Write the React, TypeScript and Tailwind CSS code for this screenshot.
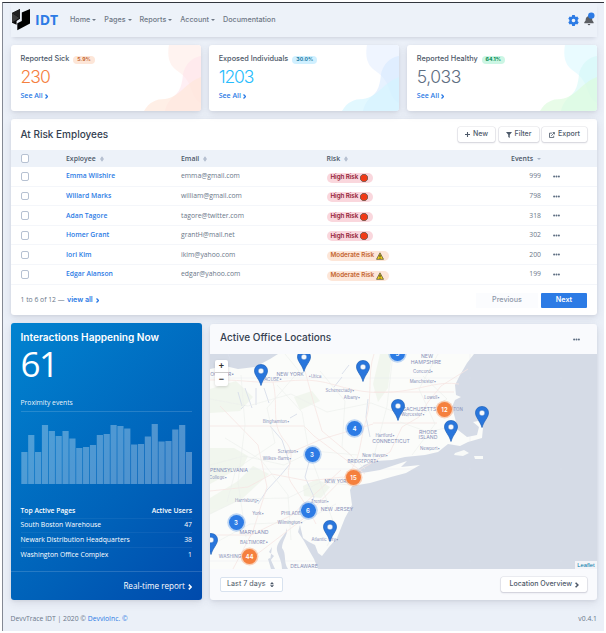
import React from "react";

const heading = "font-['Inter',sans-serif]";
const lift = "shadow-[0_3px_8px_rgba(65,69,88,0.12),0_1px_3px_rgba(65,69,88,0.08)]";

function Caret() {
  return <span className="ml-[2px] inline-block h-0 w-0 border-x-[2.500px] border-t-[2.500px] border-x-transparent border-t-[#6f7886]" />;
}

function Chevron({ className = "" }: { className?: string }) {
  return (
    <svg viewBox="0 0 6 10" className={className} fill="none" stroke="currentColor" strokeWidth="2.600">
      <path d="M1 1l4 4-4 4" />
    </svg>
  );
}

function Dots() {
  return (
    <svg viewBox="0 0 7 3" className="h-[3px] w-[7px]" fill="#5e6e82">
      <circle cx="1.100" cy="1.500" r="1" />
      <circle cx="3.500" cy="1.500" r="1" />
      <circle cx="5.900" cy="1.500" r="1" />
    </svg>
  );
}

function Logo() {
  return (
    <svg viewBox="0 0 18 22" className="h-[22px] w-[18px]">
      <path d="M0 4L8 0v9.800L4.600 12v3.800L0 13.800z" fill="#0a0a0a" />
      <path d="M0 4l7.500 5L0 13.500z" fill="#3c3c3c" />
      <path d="M0 4L8 0v9z" fill="#222" />
      <path d="M9.800 3.500L18 0v14.500L5.300 21.300v-7L9.800 12z" fill="#000" />
    </svg>
  );
}

const stats = [
  { title: "Reported Sick", pct: "5.9%", value: "230", color: "text-[#f5803e]", badge: "bg-[#fde6d8] text-[#c46632]", a: "#fff2ef", b: "#ffe2eb", c: "#ffe6d8", vt: "tracking-[-0.9px]" },
  { title: "Exposed Individuals", pct: "30.0%", value: "1203", color: "text-[#27bcfd]", badge: "bg-[#d0f0ff] text-[#1978a2]", a: "#eef4ff", b: "#d3e7ff", c: "#d2f5ff", vt: "tracking-[-1.100px]" },
  { title: "Reported Healthy", pct: "64.1%", value: "5,033", color: "text-[#5e6e82]", badge: "bg-[#ccf6e4] text-[#00864e]", a: "#e8fbff", b: "#d2f8f6", c: "#dcfadb", vt: "tracking-[-0.500px]" },
];

function StatCard({ s }: { s: (typeof stats)[number] }) {
  return (
    <div className={`relative h-[66px] rounded-[3px] bg-white pl-[10px] ${lift}`}>
      <svg viewBox="0 0 57 66" className="absolute right-0 top-0 h-[66px] w-[57px] rounded-r-[3px]">
        <path d="M25 0C23 11 25 19 31 24C36 28 42 31 46 41C49 49 51 55 57 58V0z" fill={s.a} opacity=".95" />
        <path d="M57 11C48 12 41 20 39 29C38 40 36 47 29 52C24 57 22 61 21 66H57z" fill={s.b} opacity=".55" />
        <path d="M0 66C5 57 12 54 21 54C36 52 41 38 57 32V66z" fill={s.c} opacity=".65" />
      </svg>
      <div className="relative">
        <div className="flex h-[28px] items-center pt-[1px]">
          <span className={`${heading} text-[7.300px] font-medium text-[#4d5969]`}>{s.title}</span>
          <span className={`${heading} ${s.badge} ml-[4px] flex h-[8px] items-center rounded-full px-[4px] text-[5.200px] font-bold`}>{s.pct}</span>
        </div>
        <div className={`${heading} ${s.color} ${s.vt} mt-[-6px] h-[20px] text-[17.500px] font-light leading-[20px]`}>{s.value}</div>
        <div className="mt-[4px] flex items-center gap-[2px] text-[7px] font-semibold leading-[10px] text-[#2c7be5]">
          See All <Chevron className="mt-[1px] h-[5px] w-[3px]" />
        </div>
      </div>
    </div>
  );
}

const rows = [
  ["Emma Wilshire", "emma@gmail.com", "high", "999"],
  ["Willard Marks", "william@gmail.com", "high", "798"],
  ["Adan Tagore", "tagore@twitter.com", "high", "318"],
  ["Homer Grant", "grantH@mail.net", "high", "302"],
  ["Iori Kim", "ikim@yahoo.com", "mod", "200"],
  ["Edgar Alanson", "edgar@yahoo.com", "mod", "199"],
];

function Sort() {
  return (
    <svg viewBox="0 0 4 6" className="ml-[4px] h-[6px] w-[4px]" fill="none" stroke="#a9b5c8" strokeWidth=".8">
      <path d="M.7 2.500L2 .8l1.300 1.700zM.7 3.500L2 5.200l1.300-1.700z" />
    </svg>
  );
}

function Check() {
  return <span className="h-[8.500px] w-[8.500px] rounded-[2px] border border-[#b6c1d2] bg-white" />;
}

function Risk({ kind }: { kind: string }) {
  return kind === "high" ? (
    <span className={`${heading} flex h-[10px] w-[46px] items-center gap-[1.500px] rounded-full bg-[#fad7dd] pl-[4px] text-[6.300px] font-semibold tracking-[-0.100px] text-[#932338]`}>
      High Risk
      <svg viewBox="0 0 8 8" className="h-[8px] w-[8px]">
        <path d="M2.500.4h3l2.100 2.100v3L5.500 7.600h-3L.4 5.500v-3z" fill="#f03a17" stroke="#6d5148" strokeWidth=".9" />
      </svg>
    </span>
  ) : (
    <span className={`${heading} flex h-[10px] w-[62px] items-center gap-[1.500px] rounded-full bg-[#fde6d8] pl-[4px] text-[6.300px] font-semibold text-[#c46632]`}>
      Moderate Risk
      <svg viewBox="0 0 8 8" className="h-[8px] w-[8px]">
        <path d="M4 .8L7.500 7.300h-7z" fill="#f2d21b" stroke="#5f5a3c" strokeWidth=".8" />
        <path d="M4 2.800v2.300M4 5.700v.9" stroke="#222" strokeWidth=".9" />
      </svg>
    </span>
  );
}

const cols = "grid grid-cols-[45.500px_115px_145.500px_auto_56px] items-center pl-[10px]";

function Button({ children, className = "" }: { children: React.ReactNode; className?: string }) {
  return (
    <span className={`${heading} ${className} flex h-[15px] items-center justify-center gap-[3px] rounded-[2px] bg-white text-[7px] font-medium text-[#4d5969] shadow-[0_0_0_0.600px_rgba(43,45,80,0.13),0_1px_2px_rgba(43,45,80,0.16)]`}>
      {children}
    </span>
  );
}

function Employees() {
  return (
    <section className={`mt-[8px] h-[196px] rounded-[3px] bg-white ${lift}`}>
      <div className="flex h-[31px] items-center justify-between pl-[10px] pr-[10px]">
        <h2 className={`${heading} text-[10px] font-medium text-[#344050]`}>At Risk Employees</h2>
        <div className="flex gap-[3.500px]">
          <Button className="w-[37px]">
            <svg viewBox="0 0 6 6" className="h-[5px] w-[5px]" stroke="#4d5969" strokeWidth="1.300"><path d="M3 0v6M0 3h6" /></svg>New
          </Button>
          <Button className="w-[40px]">
            <svg viewBox="0 0 8 8" className="h-[6px] w-[6px]" fill="#4d5969"><path d="M0 0h8L5 3.800V8L3 6.500V3.800z" /></svg>Filter
          </Button>
          <Button className="w-[45px]">
            <svg viewBox="0 0 8 8" className="h-[6px] w-[6px]" fill="none" stroke="#4d5969" strokeWidth="1.100"><path d="M4 1.500H.7v5.800h5.600V5M3 5.200L7 1M4.800.700h2.500v2.500" /></svg>Export
          </Button>
        </div>
      </div>
      <div className={`${cols} h-[17px] bg-[#edf2f9] text-[6.900px] font-semibold text-[#4d5969]`}>
        <Check />
        <span className="flex items-center pt-[2px]">Exployee<Sort /></span>
        <span className="flex items-center pt-[2px]">Email<Sort /></span>
        <span className="flex items-center justify-between pt-[2px]">
          <span className="flex items-center">Risk<Sort /></span>
          <span className="flex items-center">Events<i className="ml-[4px] h-0 w-0 border-x-[2px] border-t-[2px] border-x-transparent border-t-[#a9b5c8]" /></span>
        </span>
      </div>
      {rows.map(([name, email, risk, n]) => (
        <div key={name} className={`${cols} h-[19.600px] border-b border-[#f4f6fa] pt-[0.500px] text-[6.800px] text-[#6a7789]`}>
          <Check />
          <span className="font-semibold text-[#2c7be5]">{name}</span>
          <span>{email}</span>
          <span className="flex items-center justify-between"><span className="pt-[2px]"><Risk kind={risk} /></span><span>{n}</span></span>
          <span className="pl-[11.500px]"><Dots /></span>
        </div>
      ))}
      <div className="flex h-[30px] items-center justify-between pl-[10px] pr-[10px] pt-[2px] text-[6.800px] text-[#6a7789]">
        <span className="flex items-center">1 to 6 of 12 —<b className={`${heading} ml-[2.500px] text-[7.100px] font-semibold text-[#2c7be5]`}>view all</b><Chevron className="ml-[3px] h-[5px] w-[3px] text-[#2c7be5]" /></span>
        <span className={`${heading} flex text-[7.200px] font-medium`}>
          <span className="flex h-[15px] w-[62px] items-center justify-center bg-[#fbfcfe] text-[#8d97a8]">Previous</span>
          <span className="ml-[3px] flex h-[15px] w-[46px] items-center justify-center rounded-[1px] bg-[#2c7be5] font-semibold text-white">Next</span>
        </span>
      </div>
    </section>
  );
}

const bars = [32, 49, 32, 59, 53, 48, 53, 45.5, 36, 37, 39, 49, 50, 59, 58, 55.5, 39.500, 40, 47.500, 60, 42.500, 43, 54.500, 59, 32];

function Interactions() {
  return (
    <section className={`flex h-[277px] w-[191.500px] flex-col rounded-[3px] bg-[linear-gradient(-45deg,#004aac_0%,#0060b8_35%,#0183d0_100%)] text-white ${lift}`}>
      <div className="h-[238px] px-[10px] pt-[6px]">
        <h2 className={`${heading} h-[17px] whitespace-nowrap text-[10.100px] font-semibold leading-[17px]`}>Interactions Happening Now</h2>
        <div className="h-[36px] text-[35px] leading-[35px] tracking-[-1.500px]">61</div>
        <div className="mt-[15px] h-[15px] border-b border-white/15 text-[6.750px] leading-[12px] text-white/95">Proximity events</div>
        <svg viewBox="0 0 171.500 60" className="mt-[12px] block h-[60px] w-[171.500px]" fill="#fff" fillOpacity=".31">
          {bars.map((h, i) => (
            <rect key={i} x={i * 6.860 + 0.300} y={60 - h} width={6.200} height={h} />
          ))}
        </svg>
        <div className="mt-[20px] text-[6.800px]">
          <div className="flex h-[14.500px] items-center justify-between border-b border-white/5 font-semibold"><span>Top Active Pages</span><span>Active Users</span></div>
          <div className="flex h-[14.500px] items-center justify-between border-b border-white/5"><span>South Boston Warehouse</span><span>47</span></div>
          <div className="flex h-[14.500px] items-center justify-between border-b border-white/5"><span>Newark Distribution Headquarters</span><span>38</span></div>
          <div className="flex h-[14.500px] items-center justify-between"><span>Washington Office Complex</span><span>1</span></div>
        </div>
      </div>
      <div className="mt-[10px] flex flex-1 items-center justify-end gap-[3px] border-t border-white/15 pr-[10px] pt-[1px] text-[8.100px] font-medium">Real-time report <Chevron className="mt-[1px] h-[6px] w-[4px]" /></div>
    </section>
  );
}

const places: [string, number, number, number][] = [
  ["NEW YORK", 80, 22, 5.100], ["OC", 4, 22, 5], ["R•", 21, 22, 5], ["ACUSE•", 63, 27, 4.500], ["•Utica", 105, 24, 4.300], ["Schenectady•", 130, 37.500, 4.300], ["Albany•", 142, 44.500, 4.300],
  ["Binghamton•", 66, 69, 4.300], ["Scranton•", 78, 99, 4.300], ["Wilkes-Barre•", 67, 106, 4.300], ["Hartford•", 175, 83, 4.300], ["CONNECTICUT", 181, 88.500, 5.100], ["New Haven•", 165, 103, 4.300],
  ["NEW", 217, 4, 5.200], ["HAMPSHIRE", 216, 10, 5.200], ["Concord•", 213, 19, 4.300], ["Manchester•", 213, 28.500, 4.300], ["Lowell•", 222, 44.500, 4.300], ["MASSACHUSETTS", 204, 57, 5], ["Worcester•", 203, 61.500, 4.300], ["TON", 248, 57, 4.500],
  ["RHODE", 218, 79.500, 5.200], ["ISLAND", 218, 85, 5.200], ["Newport•", 220, 95.500, 4.300], ["BRIDGEPORT•", 153, 109, 4.500], ["PENNSYLVANIA", 19, 118, 5], ["College•", 8, 125, 4.300], ["NEW YORK", 127, 129, 4.700],
  ["Harrisburg•", 37, 148, 4.300], ["York•", 48, 161, 4.300], ["PHILADE", 81, 161, 4.700], ["Trenton•", 110, 149, 4.300], ["NEW JERSEY", 127, 156.500, 5.100], ["Wilmington•", 80, 170, 4.300], ["MARYLAND", 44, 180, 5.200],
  ["BALTIMORE•", 44, 189.500, 4.500], ["WASHING", 20, 204, 4.700], ["Atlantic City•", 115, 186.500, 4.300], ["DELAWARE", 94, 214, 5.100],
];

function MapArt() {
  return (
    <svg viewBox="0 0 387 215" className="block h-[215px] w-[387px]">
      <rect width="387" height="215" fill="#d5dbe6" />
      <path fill="#fbfcfa" d="M0 15L15 12L28 15L45 13L60 5L68 0H264L257 9L250 21L245 31L246 41L251 43L245 46L242 53L245 64L248 76L257 83L267 81L269 73L263 68L268 67L273 74L272 84L258 88L250 92L238 90L228 98L215 101L195 103L182 106L165 107L154 111L144 118L140 123L152 119L170 116L197 107L191 113L210 111L196 119L181 123L160 129L142 132L140 136L142 151L135 164L127 184L119 193L112 202L108 199L105 191L99 188L93 184L90 171L88 178L94 187L100 198L104 205L108 215H0Z" />
      <path d="M245 99l9-3 5 3-6 3-9-1zM264 102l9 0v3h-8z" fill="#f8faf8" />
      <g fill="#eef4ea" opacity=".7">
        <path d="M0 94h24l14 8-5 10-33 18zM170 0l12 0-4 34-10 14-5-18zM84 43l18-6 8 10-20 9zM93 132l14-7 13 8-9 11-17-2z" />
        <path d="M0 144l28-17 15-15 16 8-26 24-33 16zM0 35l26-8 17 16-13 14-30 2z" />
      </g>
      <path d="M72 215c0-12-8-17-4-25s8-10 9-16c1 8-5 12-5 20 5 6 1 14 6 21zM62 193l-3 5 5 4-4 5zM61 215l-3-10 2-1 5 11z" fill="#d5dbe6" />
      <g fill="none" stroke="#d8deea" strokeWidth=".9">
        <path d="M28 38l4 14M35 34l7 20M46 34v17M54 34l5 15M35 51l-4 4M132 20l7-9M158 45l-2 18 4 20M60 72l12 14 8 24-10 12-13 14-9 14M99 108l-4 15 9 20-10 20M132 23l-8 10M18 0l2 5M87 60l-7 4" />
      </g>
      <g fill="none" stroke="#f6e6e3" strokeWidth=".8">
        <path d="M0 26C28 25 41 29 63 28s35-5 62 3 44 9 67 6 37-10 57-7M63 28C69 53 60 70 75 87s-4 27 7 43 17 26 24 40M0 72h94l10 10 51 38M164 0c-7 20-1 41-8 66s-5 35-15 50l-48 49-51 39M258 15l-27 17-13 16-9 15-17 10-12 25-39 23M0 181h41l41-20 49-45M0 137l38-4 24-13 36 7 35-4M23 215l20-38 14-44-9-42-38-39M95 17l9 33 8 27 30 25M164 38h80M163 69h64M77 100l35-15 51-15" />
      </g>
      <g fill="none" stroke="#edf0ec" strokeWidth=".65">
        <path d="M0 45l38 7 43-12 36 18 44-9 38 14M31 21l4 50-7 57 8 55M67 31l25 27 7 40 18 49M110 17l25 30-3 46 23 22M0 111l34-9 40 9 29-14 45 4M0 160l31-15 47-1 33-16 28 3M3 190l37-20 52-2 34-18M183 0l-6 52-14 54M228 0l-19 35 16 35-23 31M75 0l14 17-32 37 8 35-39 26-9 33M15 84l36 22 27 35 3 45M117 151l9 24-9 17M213 22l24 23-23 14M190 68l28 10 22-5" />
      </g>
      <path d="M260 0v215M351 0v215M0 24h387M0 115h387M0 207h387" stroke="#e0e5ed" strokeWidth=".35" opacity=".6" />
      <g fill="#8790b8" className="font-['Inter',sans-serif]" textAnchor="middle">
        {places.map(([name, x, y, size]) => (
          <text key={name + x} x={x} y={y} fontSize={size}>{name}</text>
        ))}
      </g>
    </svg>
  );
}

function Pin({ className }: { className: string }) {
  return (
    <svg viewBox="0 0 14 22" className={`absolute h-[22px] w-[14px] ${className}`}>
      <path d="M7 .5C3 .5.500 3.400.500 6.800.500 11.500 5 14.500 7 21.500 9 14.500 13.500 11.500 13.500 6.800 13.500 3.400 11 .5 7 .5z" fill="#2976dc" stroke="#1d60b8" strokeWidth=".7" />
      <circle cx="7" cy="7" r="2.800" fill="#f7f9fc" stroke="#1d60b8" strokeWidth=".4" />
    </svg>
  );
}

function Cluster({ n, className, hot = false }: { n: string; className: string; hot?: boolean }) {
  return (
    <span className={`absolute flex h-[15px] w-[15px] items-center justify-center rounded-full text-[6px] font-semibold text-white ${heading} ${hot ? "bg-[#f5803e] shadow-[0_0_0_1.500px_rgba(245,128,62,0.35)]" : "bg-[#2c7be5] shadow-[0_0_0_1.700px_rgba(44,123,229,0.3)]"} ${className}`}>{n}</span>
  );
}

function Locations() {
  return (
    <section className={`mt-px h-[276px] w-[387px] rounded-[3px] bg-[#f9fafd] ${lift}`}>
      <div className="flex h-[30px] items-center justify-between pb-[3px] pl-[10px] pr-[17px]">
        <h2 className={`${heading} text-[10px] font-medium text-[#344050]`}>Active Office Locations</h2>
        <span className="pt-[3px]"><Dots /></span>
      </div>
      <div className="relative h-[215px] overflow-hidden">
        <MapArt />
        <Pin className="left-[44px] top-[10px]" />
        <Pin className="left-[87px] -top-[4px]" />
        <Pin className="left-[146px] top-[6px]" />
        <Pin className="left-[181px] top-[45px]" />
        <Pin className="left-[234px] top-[66px]" />
        <Pin className="left-[265px] top-[52px]" />
        <Pin className="left-[113px] top-[166px]" />
        <Pin className="-left-[6px] top-[179px]" />
        <Cluster n="5" className="left-[180px] -top-[8px]" />
        <Cluster n="4" className="left-[137px] top-[67px]" />
        <Cluster n="3" className="left-[94.500px] top-[93px]" />
        <Cluster n="6" className="left-[90.500px] top-[149px]" />
        <Cluster n="3" className="left-[18.500px] top-[161px]" />
        <Cluster n="12" hot className="left-[227px] top-[48px]" />
        <Cluster n="15" hot className="left-[136px] top-[116px]" />
        <Cluster n="44" hot className="left-[32px] top-[195px]" />
        <div className="absolute left-[5px] top-[6px] h-[26px] w-[13px] rounded-[2px] bg-white text-center font-['Liberation_Sans',sans-serif] text-[9px] font-bold leading-[12px] text-[#333] shadow-[0_1px_3px_rgba(0,0,0,0.15)]">
          <div className="h-[13px] border-b border-[#ccc]">+</div><div>−</div>
        </div>
        <span className="absolute bottom-0 right-0 flex h-[8px] w-[22px] items-center justify-center bg-white/70 font-['Liberation_Sans',sans-serif] text-[5.800px] text-[#0078a8]">Leaflet</span>
      </div>
      <div className={`${heading} flex h-[31px] items-center justify-between px-[10px] text-[7.200px] text-[#4d5969]`}>
        <span className="flex h-[15px] w-[63px] items-center rounded-[2px] border border-[#d8e2ef] bg-white pl-[6px]">Last 7 days
          <svg viewBox="0 0 6 8" className="ml-[4px] h-[5.500px] w-[4px]" fill="#4d5969"><path d="M0 3.200L3 0l3 3.200zM0 4.800h6L3 8z" /></svg>
        </span>
        <Button className="w-[86px]">Location Overview <Chevron className="h-[6px] w-[3.500px]" /></Button>
      </div>
    </section>
  );
}

export default function App() {
  return (
    <div className="h-[633px] w-[606px] overflow-hidden bg-white font-['Open_Sans',sans-serif]">
      <div className="h-[631px] w-[604px] bg-white pl-[2px] pt-[2px]">
        <main className="h-[629px] w-[602px] border-l border-t border-l-[#848994] border-t-[#32363e] bg-[#ebf0f8] pl-[7.500px] pr-[7px]">
          <nav className="flex h-[34px] items-center justify-between bg-[#edf2f9] pl-[1.500px] pr-[2px] shadow-[0_3px_4px_-2px_rgba(43,45,80,0.17)]">
            <div className={`${heading} flex items-center`}>
              <Logo />
              <b className="ml-[5px] w-[35px] font-['Open_Sans',sans-serif] text-[14px] font-bold leading-none text-[#2c7be5]">IDT</b>
              <div className="flex items-center gap-[8px] whitespace-nowrap text-[7.200px] font-medium text-[#6f7886]">
                <span className="flex items-center">Home<Caret /></span>
                <span className="flex items-center">Pages<Caret /></span>
                <span className="flex items-center">Reports<Caret /></span>
                <span className="flex items-center">Account<Caret /></span>
                <span>Documentation</span>
              </div>
            </div>
            <div className="flex items-center gap-[5px]">
              <svg viewBox="0 0 12 12" className="h-[11px] w-[11px]">
                <path fill="#2c7be5" fillRule="evenodd" d="M4.600 0h2.800l.4 1.600.9.5 1.500-.5 1.500 2.400-1.200 1.200v1.600L11.700 8l-1.500 2.400-1.500-.5-.9.500L7.400 12H4.600l-.4-1.600-.9-.5-1.500.5L.3 8l1.200-1.200V5.200L.3 4l1.500-2.400 1.500.5.9-.5zM6 4a2 2 0 100 4 2 2 0 000-4z" />
              </svg>
              <svg viewBox="0 0 11 14" className="mb-[2px] h-[14px] w-[11px]">
                <path fill="#5b5e63" d="M4.300 3.500h1.400v.8c2 .5 2.500 2 2.600 4L9.600 10.300v1H.3v-1L1.600 8.500c0-2.300.7-3.700 2.700-4.200zM3.700 12h2.600a1.300 1.300 0 01-2.600 0z" />
                <circle cx="7.300" cy="3.600" r="3.200" fill="#2c7be5" />
              </svg>
            </div>
          </nav>
          <div className="mt-[8px] grid grid-cols-3 gap-[8px]">
            {stats.map((s) => <StatCard key={s.title} s={s} />)}
          </div>
          <Employees />
          <div className="mt-[8px] flex justify-between">
            <Interactions />
            <Locations />
          </div>
          <footer className="flex h-[31px] items-center justify-between pt-[7px] text-[6.800px] text-[#6a7789]">
            <span>DevvTrace IDT | 2020 © <span className="text-[#2c7be5]">DevvioInc. ©</span></span>
            <span>v0.4.1</span>
          </footer>
        </main>
      </div>
    </div>
  );
}
